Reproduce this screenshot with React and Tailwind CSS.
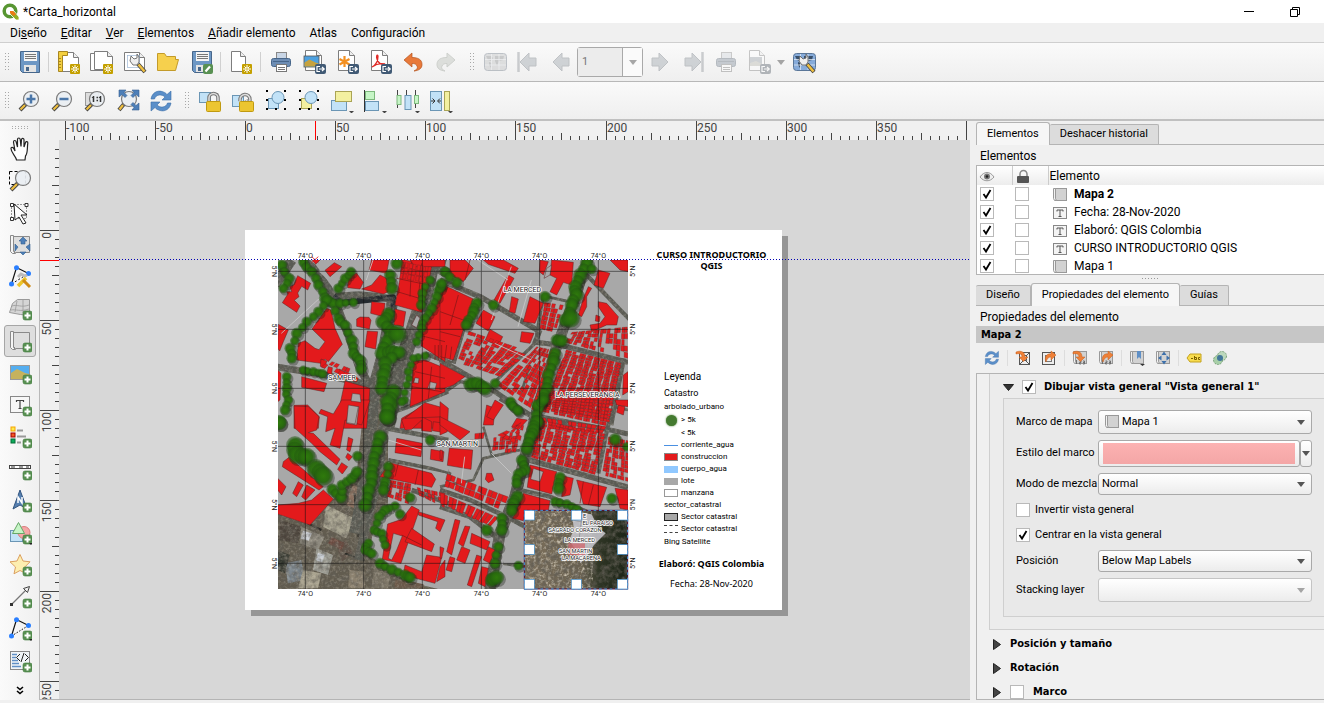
import React, { useLayoutEffect, useRef, useState } from "react";

const STEP = 90.15; // pixels for 50 mm on the rulers

/* ---------- small shared pieces ---------- */

function Icon({ children, size = 24, faded = false }) {
  return (
    <svg
      width={size}
      height={size}
      viewBox={`0 0 ${size} ${size}`}
      className={faded ? "opacity-40 grayscale-[60%] shrink-0" : "shrink-0"}
      aria-hidden="true"
    >
      {children}
    </svg>
  );
}

function PlusBadge() {
  return (
    <g>
      <rect x="15" y="14" width="9" height="9" rx="2" fill="#589052" stroke="#3f7a3c" strokeWidth="0.6" />
      <path d="M19.5 15.5v6M16.5 18.500h6" stroke="#fff" strokeWidth="2" />
    </g>
  );
}

function NewBadge() {
  return (
    <g>
      <rect x="13" y="14" width="10" height="10" rx="1" fill="#c4a000" />
      <path d="M18 15v8M14 19h8M15.300 16.300l5.400 5.400M20.700 16.300l-5.400 5.400" stroke="#fff" strokeWidth="1" />
      <circle cx="18" cy="19" r="1.300" fill="#c4a000" stroke="#fff" strokeWidth="0.800" />
    </g>
  );
}

function ExportBadge() {
  return (
    <g>
      <rect x="13" y="14" width="11" height="10" rx="2" fill="#415a75" />
      <path d="M18 16.500h-3v5h3M17 19h5M20 17l2.200 2-2.200 2" fill="none" stroke="#fff" strokeWidth="1.200" />
    </g>
  );
}

function Sheet({ x = 3, y = 1, w = 16, h = 20 }) {
  return (
    <g fill="#fff" stroke="#7d7d7d">
      <path d={`M${x + 0.5} ${y + 0.5}h${w - 6}l5 5v${h - 6}h-${w - 1}z`} />
      <path d={`M${x + w - 5.5} ${y + 0.5}v5h5`} fill="#eee" />
    </g>
  );
}

function Caret() {
  return <path d="M19 22h5l-2.500 2.500z" fill="#444" />;
}

/* ---------- toolbar icons ---------- */

const Floppy = () => (
  <g>
    <path d="M3.500 1.500h19v21h-17l-2-2z" fill="#6d97c4" stroke="#47668a" />
    <rect x="7" y="2" width="13" height="9" fill="#f4f4f4" />
    <path d="M8 4.500h11M8 6.500h11M8 8.500h11" stroke="#777" />
    <rect x="7" y="15" width="12" height="7" fill="#e4e4e4" />
    <rect x="9" y="17" width="3" height="4" fill="#47668a" />
  </g>
);

const Printer = () => (
  <g>
    <rect x="7.500" y="2.500" width="10" height="7" fill="#c9d6e6" stroke="#888" />
    <rect x="2.500" y="8.500" width="19" height="8" rx="2" fill="#6d8db4" stroke="#47668a" />
    <path d="M4 11.500h16" stroke="#47668a" />
    <rect x="7.500" y="14.500" width="10" height="7" fill="#fff" stroke="#777" />
    <path d="M9 17.500h7M9 19.500h7" stroke="#777" />
  </g>
);

const Lens = ({ children, x = 14, y = 10 }) => (
  <g>
    <path d={`M${x - 5} ${y + 5}L3 21`} stroke="#444" strokeWidth="4" />
    <path d={`M${x - 6} ${y + 6}L3.500 20.500`} stroke="#f0c040" strokeWidth="2.200" />
    <circle cx={x} cy={y} r="7.500" fill="#e9eef2" fillOpacity="0.920" stroke="#7b7b7b" strokeWidth="1.200" />
    {children}
  </g>
);

const Wrench = () => (
  <g>
    <path d="M15 14l7 8" stroke="#444" strokeWidth="4" />
    <path d="M15.500 14.500l6 7" stroke="#f0c040" strokeWidth="2.500" />
    <path d="M8 6l3 3 3-1 0-4 2 3 0 5-2 3-4 0-3-4z" fill="#eee" stroke="#666" strokeWidth="0.900" />
  </g>
);

const MapTile = ({ color = "#6d97c4", land = "#39506b" }) => (
  <g>
    <rect x="1.500" y="3.500" width="22" height="17" rx="3" fill={color} stroke="#5a7698" />
    <path d="M3 6h5l2 2-2 3-3-1zM12 6h9l-1 4-4 1-2 5-2-5zM6 12l3 1-1 5-2-3z" fill={land} />
    <path d="M2 9.500h21M2 15h21M8.500 4v16M16 4v16" stroke="#dfe8f2" strokeWidth="0.800" />
  </g>
);

const ArrowRight = () => <path d="M4 8h7V3l9 9-9 9v-5H4z" fill="#8ea2b3" stroke="#667a8d" />;
const Refresh = () => (
  <g fill="#5b8fc9" stroke="#3c6ea8" strokeWidth="0.600">
    <path d="M2 10C3 4 8 1 13 2.500c2 .5 4 1.500 5 3l4-3.500v9h-9l3-3C13 5 7 5 5.500 10z" />
    <path d="M22 14c-1 6-6 9-11 7.500-2-.5-4-1.500-5-3L2 22v-9h9l-3 3c3 3 9 3 10.500-2z" />
  </g>
);

const Nodes = () => (
  <g fill="#000">
    <rect x="2" y="1" width="2" height="2" /><rect x="20" y="1" width="2" height="2" />
    <rect x="2" y="10" width="2" height="2" /><rect x="20" y="10" width="2" height="2" />
    <rect x="2" y="19" width="2" height="2" /><rect x="11" y="19" width="2" height="2" /><rect x="20" y="19" width="2" height="2" />
  </g>
);

const Padlock = ({ open }) => (
  <g>
    <path d={open ? "M9 12c-1-8 10-9 10-1 0 2-3 2-4 0" : "M11 13V9a4.500 4.500 0 0 1 9 0v4"} fill="none" stroke="#777" strokeWidth="3.500" />
    <path d={open ? "M9 12c-1-8 10-9 10-1 0 2-3 2-4 0" : "M11 13V9a4.500 4.500 0 0 1 9 0v4"} fill="none" stroke="#ddd" strokeWidth="1.500" />
    <rect x="8.500" y="12.500" width="14" height="10" rx="1" fill="#ecc531" stroke="#c09a10" />
  </g>
);

const BLUE = { fill: "#c2e2f7", stroke: "#6b96b5" };
const YELLOW = { fill: "#f3f0a0", stroke: "#aaa455" };
const GREEN = { fill: "#c6f5c6", stroke: "#7db87d" };

const FILE_TOOLS = [
  ["Guardar proyecto", <Floppy />],
  null,
  ["Nueva composición", <><Sheet x={4} y={2} w={18} /><path d="M1.500 1.500h9v4h-5v16h-4z" fill="#f3cf3f" stroke="#a88620" /><path d="M2 8.500h2M2 11.500h2M2 14.500h2M2 17.500h2" stroke="#a88620" /><NewBadge /></>],
  ["Duplicar composición", <><Sheet x={0} y={3} w={18} h={18} /><Sheet x={4} y={1} w={19} h={19} /><NewBadge /></>],
  ["Administrador de composiciones", <><Sheet x={1} y={2} w={21} h={19} /><rect x="4.500" y="5.500" width="12" height="12" fill="none" stroke="#9db7d5" strokeWidth="0.700" /><Wrench /></>],
  ["Abrir plantilla", <path d="M1.500 20.500v-17h7l2 3h9v3h3l-3 11z" fill="#f6d04d" stroke="#c39b2a" />],
  ["Guardar como plantilla", <><Floppy /><rect x="14" y="14" width="10" height="10" rx="2" fill="#589052" /><path d="M16.500 21.500l4.500-5" stroke="#fff" strokeWidth="2.200" /></>],
  null,
  ["Nueva página", <><Sheet x={2} y={1} w={15} h={21} /><NewBadge /></>],
  null,
  ["Imprimir", <Printer />],
  ["Exportar como imagen", <><Sheet x={3} y={0} w={17} h={21} /><rect x="2" y="6" width="15" height="11" fill="#4ea1e0" stroke="#555" strokeWidth="0.800" /><path d="M2.500 16.500v-4l5-3 6 3 3 1v3z" fill="#c6a23f" /><ExportBadge /></>],
  ["Exportar como SVG", <><Sheet x={3} y={0} w={17} h={21} /><path d="M9.500 6v11M4.500 9l10 5.500M4.500 14.500l10-5.500" stroke="#f39021" strokeWidth="2.200" /><ExportBadge /></>],
  ["Exportar como PDF", <><Sheet x={3} y={0} w={17} h={21} /><path d="M4 17c4-2 6-6 6-11-1-2-2 0-1 3 1 4 4 6 8 5-4-1-9 0-13 3z" fill="none" stroke="#e02a26" strokeWidth="1.300" /><ExportBadge /></>],
  ["Deshacer", <path d="M3 10l8-7v4.500c6 0 10 2 10 7 0 4-3 6-8 6.500 3-1.500 4-3 3-5s-2-2.500-5-2.500V17z" fill="#e8793a" stroke="#b5531d" strokeWidth="0.700" />],
  ["Rehacer", <path d="M21 10l-8-7v4.500c-6 0-10 2-10 7 0 4 3 6 8 6.500-3-1.500-4-3-3-5s2-2.500 5-2.500V17z" fill="#b4c0ae" stroke="#8b9a84" />, true],
];

const ATLAS_BEFORE = [
  ["Vista previa del atlas", <MapTile color="#b8bcc0" land="#83898e" />, true],
  ["Primer objeto", <g transform="matrix(-1 0 0 1 24 0)"><ArrowRight /><path d="M21.500 2v20" stroke="#8390a0" strokeWidth="2.500" /></g>, true],
  ["Objeto anterior", <g transform="matrix(-1 0 0 1 24 0)"><ArrowRight /></g>, true],
];
const ATLAS_AFTER = [
  ["Objeto siguiente", <ArrowRight />, true],
  ["Último objeto", <><ArrowRight /><path d="M21.500 2v20" stroke="#8390a0" strokeWidth="2.500" /></>, true],
  ["Imprimir atlas", <Printer />, true],
  ["Exportar atlas", <><Sheet x={2} y={0} w={16} h={21} /><rect x="3" y="7" width="12" height="9" fill="#8ea2b3" /><path d="M3 16v-3l6-2 6 3v2z" fill="#b9b9a0" /><ExportBadge /></>, true],
];

const VIEW_TOOLS = [
  ["Acercar zum", <Lens><path d="M14 5.500v9M9.500 10h9" stroke="#4a76a8" strokeWidth="2.500" /></Lens>],
  ["Alejar zum", <Lens><path d="M9.500 10h9" stroke="#4a76a8" strokeWidth="2.500" /></Lens>],
  ["Zum al 100%", <><rect x="2.500" y="3.500" width="13" height="13" fill="#ddd" stroke="#999" /><Lens /><path d="M10.500 7v6M17.500 7v6M9 8.500l1.500-1M16 8.500l1.500-1" stroke="#333" strokeWidth="1.500" /><path d="M13.500 8.500h1.500M13.500 11.500h1.500" stroke="#333" strokeWidth="1.500" /></>],
  ["Zum general", <><Lens x={13} y={10} /><path d="M3 1h7L8 3.500l3 3-2 2-3-3L3 8zM23 1h-7l2 2.500-3 3 2 2 3-3 3 2.500zM23 21v-7l-3 2.500-3-3-2 2 3 3-2 2.500z" fill="#4d7fb8" stroke="#355f90" strokeWidth="0.600" /></>],
  ["Actualizar vista", <Refresh />],
];

const ACTION_TOOLS = [
  ["Bloquear elementos", <><rect x="1.500" y="3.500" width="11" height="10" {...BLUE} /><path d="M14 4.500h6v5" fill="none" stroke="#888" /><Padlock /></>],
  ["Desbloquear elementos", <><rect x="1.500" y="6.500" width="11" height="11" {...BLUE} /><Padlock open /></>],
  ["Agrupar", <><rect x="4.500" y="9.500" width="10" height="10" {...BLUE} /><circle cx="14" cy="8.500" r="6" {...BLUE} /><Nodes /></>],
  ["Desagrupar", <><rect x="4.500" y="9.500" width="10" height="10" {...YELLOW} /><circle cx="14" cy="8.500" r="6" {...BLUE} /><Nodes /></>],
  ["Elevar", <><rect x="1.500" y="11.500" width="15" height="10" {...BLUE} /><rect x="5.500" y="2.500" width="16" height="10" {...YELLOW} /><Caret /></>],
  ["Alinear a la izquierda", <><path d="M1.500 1v22" stroke="#333" /><rect x="2.500" y="2.500" width="9" height="8" {...GREEN} /><rect x="2.500" y="12.500" width="13" height="9" {...BLUE} /><Caret /></>],
  ["Distribuir", <><path d="M1.500 1v18M10.500 1v18M19.500 1v18" stroke="#444" /><rect x="1" y="6.500" width="4" height="9" {...GREEN} /><rect x="9" y="6.500" width="6" height="14" {...BLUE} /><rect x="18.500" y="6.500" width="4" height="8" {...GREEN} /><Caret /></>],
  ["Redimensionar", <><rect x="1.500" y="2.500" width="11" height="19" {...BLUE} /><rect x="15.500" y="2.500" width="5" height="19" {...YELLOW} /><path d="M2 12h3M12 12h-3M3.500 9.500L6 12l-2.500 2.500M11 9.500L8.500 12l2.500 2.500" fill="none" stroke="#333" /><Caret /></>],
];

const MapRoll = () => (
  <g stroke="#8a8a8a">
    <path d="M5.500 3.500h16v16h-14l-2-2z" fill="#dedede" />
    <path d="M2.500 2.500h3v16l2 2h-3l-2-2z" fill="#f5f5f5" />
  </g>
);

const NodeShape = ({ dashed }) => (
  <g>
    <path d="M3.500 19L8.500 2.500 20.500 8.500" fill="none" stroke="#111" strokeWidth="1.200" />
    <path d="M3.500 19L20.500 8.500" stroke="#111" strokeDasharray={dashed ? "1.500 1.500" : "2 2"} />
    <circle cx="8.500" cy="2.800" r="2.500" fill="#2a7fff" />
    <circle cx="20.500" cy="8.500" r="2.500" fill="#2a7fff" />
    <circle cx="3.500" cy="19" r="2.500" fill="#2a7fff" />
  </g>
);

const SIDE_TOOLS = [
  ["Desplazar diseño", <path d="M8.500 23C8 19 3 16 3 11.500c0-1.500 2-1.500 3 .5l1 2L5.500 5c0-2 2.300-2 2.700 0l1.300 5V2.500c0-2 2.500-2 2.700 0l.8 7 .5-7c.3-1.800 2.500-1.500 2.500.3L16 10l1.500-4.500c.6-1.600 2.500-1 2.300.6C19 11 20 16 17.500 19l-.5 4z" fill="#fff" stroke="#222" strokeWidth="1.200" />],
  ["Zum", <><rect x="1.500" y="2.500" width="16" height="13" fill="none" stroke="#000" strokeDasharray="3 2" /><Lens x={15} y={9} /></>],
  ["Seleccionar/mover elemento", <><rect x="3.500" y="3.500" width="15" height="14" fill="none" stroke="#333" strokeDasharray="1 2" /><path d="M2.500 2.500h3v3h-3zM17 2.500h3v3h-3zM2.500 16.500h3v3h-3z" fill="#fff" stroke="#333" /><path d="M6 3l13 11h-6l5 8-3 1-4-7-4 3z" fill="#fff" stroke="#222" /></>],
  ["Mover contenido", <><MapRoll /><path d="M15 4l4 4h-2v3h-4V8h-2zM15 22l-3-3h6zM7 11l3 3-3 4zM22 11l-4 3 4 4z" fill="#4d7fb8" stroke="#33608f" strokeWidth="0.600" /></>],
  ["Editar nodos", <><NodeShape /><path d="M10 12l3-3 4 2 2-1" stroke="#bbb" strokeWidth="3" fill="none" /><path d="M10 21l8-8" stroke="#edc52b" strokeWidth="3.500" /><path d="M15 15l7 7" stroke="#cf8a16" strokeWidth="3" /></>],
  ["Añadir mapa 3D", <><path d="M1.500 15.500l3-9 5-4h12v16l-9-1z" fill="#d5d5d5" stroke="#999" /><path d="M4 9c5-2 9 2 17-1M3 13c5-1 9 2 18-1M9 4l-2 11M15 3l0 13" stroke="#999" fill="none" strokeWidth="0.800" /><PlusBadge /></>],
  ["Añadir mapa", <><MapRoll /><PlusBadge /></>, true],
  ["Añadir imagen", <><rect x="2.500" y="4.500" width="19" height="14" fill="#55aef0" stroke="#999" /><path d="M3 18v-6l6-4 8 4 4 1v5z" fill="#c6b25d" /><PlusBadge /></>],
  ["Añadir etiqueta", <><rect x="2.500" y="3.500" width="19" height="16" fill="#f7f7f7" stroke="#888" /><path d="M8.500 9V7.500h7V9M12 7.500v8M10.500 15.500h3" stroke="#444" strokeWidth="1.200" fill="none" /><PlusBadge /></>],
  ["Añadir leyenda", <><rect x="3" y="2" width="4" height="4" fill="#fce94f" stroke="#f5a400" /><rect x="3" y="8" width="4" height="4" fill="#f15a22" stroke="#a40000" /><rect x="3" y="14" width="4" height="4" fill="#0cab5b" stroke="#056b35" /><path d="M9 5.500h6M9 11.500h9M9 17.500h4" stroke="#999" strokeWidth="2" /><PlusBadge /></>],
  ["Añadir barra de escala", <><rect x="1.500" y="8.500" width="21" height="3" fill="#fff" stroke="#444" /><path d="M3 10h4M11 10h4M18 10h3" stroke="#999" strokeWidth="2" /><PlusBadge /></>],
  ["Añadir flecha de norte", <><path d="M12 1l7 19-7-4-7 4z" fill="#557fb0" stroke="#33557f" /><path d="M10 14V8l4 6V8" stroke="#fff" strokeWidth="1.500" fill="none" /><PlusBadge /></>],
  ["Añadir forma", <><rect x="2.500" y="9.500" width="12" height="11" {...BLUE} /><circle cx="16" cy="11.500" r="6" fill="#f4a6a6" stroke="#d97c7c" /><path d="M10.500 1.500l6 11h-12z" fill="#c6f5c6" stroke="#67a767" /><PlusBadge /><path d="M21 22h4l-2 2z" fill="#222" /></>],
  ["Añadir marcador", <><path d="M12 1.500l3 6.500 7 .8-5 5 1.500 7L12 17.500l-6 3.300L7.500 14 2 8.800 9 8z" fill="#fdeeb0" stroke="#dba060" /><PlusBadge /></>],
  ["Añadir flecha", <><path d="M4 19L19 4" stroke="#777" strokeWidth="1.200" /><rect x="2" y="18" width="3" height="3" fill="#333" /><path d="M21.500 1.500l-6 2 4 4z" fill="#eee" stroke="#444" /><PlusBadge /></>],
  ["Añadir elemento de nodos", <><NodeShape dashed /><PlusBadge /><path d="M21 22h4l-2 2z" fill="#222" /></>],
  ["Añadir HTML", <><rect x="2.500" y="2.500" width="19" height="18" fill="#f0f4f7" stroke="#888" /><path d="M4 5.500h5M4 8.500h4M4 11.500h6M4 14.500h7M4 17.500h9" stroke="#5f8fc6" strokeWidth="1.700" /><path d="M12 5l-3.500 3.500L12 12M17 5l3.500 3.500L17 12M16 4l-3 9" fill="none" stroke="#222" /><PlusBadge /></>],
];

const MiniMap = () => (
  <g stroke="#999">
    <rect x="3.500" y="1.500" width="11" height="12" fill="#d2d2d2" />
    <path d="M1.500 1.500h2v10l1 2h-2l-1-2z" fill="#f2f2f2" />
  </g>
);
const OrangeIn = () => <path d="M1 2c5-2 9 0 9 5h3l-4.500 4.500L4 7h3C7 4 5 3 1 4z" fill="#ee8038" stroke="#c65f1d" strokeWidth="0.500" />;
const OrangeOut = () => <path d="M5 12C3 7 6 3 10 4V1l5 4-5 5V7C7 7 6 9 5 12z" fill="#ee8038" stroke="#c65f1d" strokeWidth="0.500" />;
const Scale = () => <path d="M4.500 10v4M7.500 11h1.500v1.500H7.500V14H9M11 11h1.500v3H11M11 12.500h1.500" stroke="#666" strokeWidth="0.900" fill="none" />;

const ITEM_TOOLS = [
  ["Actualizar vista previa", <g transform="scale(0.660)"><Refresh /></g>],
  null,
  ["Fijar extensión", <><rect x="4.500" y="2.500" width="10" height="12" fill="#eee" stroke="#555" /><path d="M7.500 5.500h4v5h-4zM5 3l3 3M14 3l-3 3M5 14l3-3M14 14l-3-3" stroke="#555" fill="none" /><OrangeIn /></>],
  ["Ver extensión", <><rect x="1.500" y="2.500" width="12" height="12" fill="#eee" stroke="#555" /><rect x="4.500" y="5.500" width="6" height="6" fill="none" stroke="#777" /><OrangeOut /></>],
  null,
  ["Fijar escala", <><MiniMap /><Scale /><OrangeIn /></>],
  ["Ver escala", <><MiniMap /><Scale /><OrangeOut /></>],
  null,
  ["Marcadores", <><MiniMap /><path d="M8 1h4v8l-2-2-2 2z" fill="#5f8fc6" /><path d="M11 14h5l-2.500 2z" fill="#333" /></>],
  ["Mover contenido del mapa", <><MiniMap /><path d="M9 1.500l2.500 3.500h-5zM9 14.500l2.500-3.500h-5zM3 8l3.500-2.500v5zM15 8l-3.500-2.500v5z" fill="#3d70ab" /></>],
  null,
  ["Etiquetas", <><path d="M1 8l3-4h11v8H4z" fill="#f8dc4e" stroke="#c4a21e" /><path d="M5 8.500h2M8.500 6v3.500h2v-2h-2M14 7.500h-1.500v2H14" stroke="#7b6000" fill="none" /></>],
  ["Recorte", <><circle cx="10" cy="6" r="4.500" fill="#bcd8bc" stroke="#7ca37c" strokeDasharray="2 1" /><circle cx="6" cy="10" r="4.500" fill="#a8cfa8" stroke="#7ca37c" strokeDasharray="2 1" /><circle cx="8" cy="8" r="3" fill="#41769a" /></>],
];

/* ---------- controls ---------- */

function ToolButton({ tool }) {
  const [label, art, faded] = tool;
  return (
    <button type="button" title={label} aria-label={label} disabled={Boolean(faded)} className="flex h-8 w-[33px] shrink-0 items-center justify-center">
      <Icon faded={faded}>{art}</Icon>
    </button>
  );
}

function Separator() {
  return <span className="mx-[3px] h-5 w-px shrink-0 bg-[#d0d0d0]" />;
}

function Grip() {
  return (
    <span className="grid h-[18px] w-1 shrink-0 grid-cols-2 gap-px">
      {Array.from({ length: 12 }, (_, i) => <i key={i} className="h-px w-px bg-[#a8a8a8]" />)}
    </span>
  );
}

function CheckBox({ id, label, checked }) {
  return (
    <span className="relative inline-flex h-[14px] w-[14px] shrink-0 align-middle">
      <input id={id} type="checkbox" aria-label={label} defaultChecked={checked} className="peer h-[14px] w-[14px] appearance-none border border-[#b9b9b9] bg-white" />
      <svg width="14" height="14" className="pointer-events-none absolute left-0 top-0 hidden peer-checked:block" aria-hidden="true">
        <path d="M3.500 7l2.500 3.500 4.500-7.500" fill="none" stroke="#000" strokeWidth="1.800" />
      </svg>
    </span>
  );
}

function Arrow({ faded }) {
  return (
    <svg width="8" height="5" className={faded ? "opacity-50" : ""} aria-hidden="true">
      <path d="M0 0h8L4 5z" fill="#555" />
    </svg>
  );
}

function Combo({ id, value, height = "h-[22px]", icon, disabled }) {
  return (
    <div className="relative flex-1">
      <select
        id={id}
        disabled={disabled}
        className={`block w-full appearance-none rounded-[3px] border bg-linear-to-b from-white to-[#ececec] text-black ${height} ${icon ? "pl-[23px]" : "pl-[3px]"} ${disabled ? "border-[#c4c4c4]" : "border-[#a9a9a9]"}`}
      >
        <option>{value}</option>
      </select>
      {icon && <span className="pointer-events-none absolute left-[6px] top-1"><Icon size={16}><MiniMap /></Icon></span>}
      <span className="pointer-events-none absolute inset-y-0 right-[7px] flex items-center"><Arrow faded={disabled} /></span>
    </div>
  );
}

function Tab({ active, children }) {
  return (
    <button
      type="button"
      role="tab"
      aria-selected={active}
      className={
        active
          ? "-mb-px h-[23px] rounded-t-[3px] border border-b-0 border-[#b4b4b4] bg-[#f6f6f6] px-[10px]"
          : "h-5 rounded-t-[2px] border border-l-0 border-b-0 border-[#b4b4b4] bg-[#dcdcdc] px-[10px]"
      }
    >
      {children}
    </button>
  );
}

/* ---------- rulers ---------- */

// current length of a ruler, so that only the ticks in view are drawn
function useLength(side) {
  const ref = useRef(null);
  const [length, setLength] = useState(0);
  useLayoutEffect(() => {
    const measure = () => setLength(ref.current.getBoundingClientRect()[side]);
    measure();
    window.addEventListener("resize", measure);
    return () => window.removeEventListener("resize", measure);
  }, [side]);
  return [ref, length];
}

function tickLength(i) {
  if (i % 10 === 0) return 19;
  return i % 5 === 0 ? 7 : 4;
}

function TopRuler() {
  const [ref, length] = useLength("width");
  const ticks = [];
  for (let i = -20; 186 + (i * STEP) / 10 < length; i++) {
    const x = Math.round(186 + (i * STEP) / 10);
    ticks.push(<path key={i} d={`M${x + 0.5} ${19 - tickLength(i)}V19`} stroke="#444" />);
    if (i % 10 === 0 && x + 20 < length) {
      ticks.push(<text key={`t${i}`} x={x + 1} y="11" className="fill-[#444] text-[12px]">{i * 5}</text>);
    }
  }
  return (
    <svg ref={ref} className="block h-[19px] w-full bg-[#f0f0f0]" role="img" aria-label="Regla horizontal">
      {ticks}
      <path d="M256.500 0V19" stroke="#f00" />
    </svg>
  );
}

function SideRuler() {
  const [ref, length] = useLength("height");
  const ticks = [];
  for (let i = -9; 109 + (i * STEP) / 10 < length; i++) {
    const y = Math.round(109 + (i * STEP) / 10);
    ticks.push(<path key={i} d={`M${19 - tickLength(i)} ${y + 0.5}H19`} stroke="#444" />);
    if (i % 10 === 0) {
      ticks.push(<text key={`t${i}`} transform={`translate(11 ${y + 2}) rotate(-90)`} textAnchor="end" className="fill-[#444] text-[12px]">{i * 5}</text>);
    }
  }
  return (
    <svg ref={ref} className="block h-full w-[19px] shrink-0 bg-[#f0f0f0]" role="img" aria-label="Regla vertical">
      {ticks}
      <path d="M0 139.500H19" stroke="#f00" strokeWidth="1" />
    </svg>
  );
}

/* ---------- cadastral map ---------- */

// repeatable pseudo random number for a pair of integers
function rnd(a, b) {
  const s = Math.sin(a * 127.1 + b * 311.7) * 43758.5453;
  return s - Math.floor(s);
}

// fills a four cornered block with small parcels
function parcels([a, b, c, d], cols, rows, keep) {
  const at = (u, v) => {
    const x = (1 - v) * ((1 - u) * a[0] + u * b[0]) + v * ((1 - u) * d[0] + u * c[0]);
    const y = (1 - v) * ((1 - u) * a[1] + u * b[1]) + v * ((1 - u) * d[1] + u * c[1]);
    return `${x.toFixed(1)} ${y.toFixed(1)}`;
  };
  let path = "";
  for (let i = 0; i < cols; i++) {
    for (let j = 0; j < rows; j++) {
      if (rnd(i + a[0], j + a[1]) > keep) continue;
      const side = i % 2 ? 0.04 : 0.26;
      const u0 = (i + side * rnd(i, j + 4) + (i % 2 ? 0 : 0.08)) / cols;
      const u1 = (i + 1 - (i % 2 ? 0.3 : 0.02) * rnd(j, i)) / cols;
      const v0 = (j + 0.04) / rows;
      const v1 = (j + 0.99 - 0.14 * rnd(j + 7, i)) / rows;
      path += `M${at(u0, v0)}L${at(u1, v0)}L${at(u1, v1)}L${at(u0, v1)}Z`;
    }
  }
  return path;
}

const QUADS = [
  {
    dx: -99, dy: -105,
    roads: [
      ["150 80 205 130 250 190 270 230 310 330 340 420 372 480 385 610", 24],
      ["265 215 340 210 400 215 450 225", 22],
      ["445 215 430 300 410 400 385 490 380 610", 34],
      ["560 120 540 210 500 330 460 440 425 610", 46],
      ["90 425 230 448 375 480", 20],
      ["90 180 140 105", 30],
      ["540 385 620 415", 14],
      ["450 560 560 520 610 500", 12],
      ["540 110 620 150", 30],
    ],
    lots: ["222 140 250 96 300 112 258 172"],
    red: [
      "112 233 128 208 125 200 140 200 134 185 146 180 158 152 197 175 188 195 170 184 158 204 162 215 148 226 165 243 155 262",
      "240 136 268 113 290 125 255 155", "198 100 230 100 212 118", "380 105 432 105 425 145 372 135",
      "310 152 335 145 355 172 345 192 308 188", "350 192 380 180 405 150 425 160 430 200 415 207",
      "380 230 420 235 415 275 377 265", "335 282 345 276 372 277 378 286 373 312 335 304",
      "367 318 398 320 392 372 360 365",
      "155 405 160 355 180 347 210 370 222 374 240 350 201 312 245 250 258 255 270 310 292 358 250 410 240 402 228 415",
      "100 298 130 315 115 350 104 378 98 370", "98 435 108 445 105 525 98 530",
      "170 455 245 475 237 500 170 487", "147 541 188 540 223 575 220 610 147 610",
      "300 468 375 490 365 610 270 610", "250 425 262 428 260 448 246 444", "282 432 340 460 335 470 278 455",
      "228 402 245 408 240 430 226 424",
      "470 105 480 105 560 125 550 180 530 262 450 240 467 150",
      "450 252 482 260 475 305 447 300", "600 165 560 270 535 300 528 362 600 410",
      "505 408 540 405 600 430 600 500 495 545", "470 580 530 545 600 550 600 610 465 610",
      "495 105 600 105 600 125 510 125",
    ],
    holes: ["322 505 345 508 348 532 318 528", "312 545 342 545 335 600 304 595", "510 458 522 460 520 475 506 473", "555 470 575 475 570 495 548 490", "500 300 515 270 525 280 515 308"],
    lines: ["440 195 540 225", "455 160 550 180", "500 110 495 215", "530 115 520 220", "520 330 600 350", "560 425 550 520", "510 440 600 460", "500 485 590 500", "570 360 570 405M580 360 580 405M590 360 590 405"],
    dense: [[[[470, 110], [550, 125], [545, 175], [460, 160]], 7, 3, 0.9], [[[250, 405], [340, 440], [335, 468], [225, 425]], 8, 2, 0.6]],
    trees: [
      [16, "175 112 200 140 220 180 240 220 265 235 280 280 300 300 320 345 325 385 345 405 348 432"],
      [15, "245 225 220 260 185 290 155 325 135 370 140 400"], [15, "110 120 132 160 115 190"],
      [14, "280 190 300 160 318 140"], [13, "285 235 325 232"], [17, "435 150 440 190"],
      [20, "430 268 412 290 440 320 425 350 410 385 440 378 462 382 420 415 415 450 410 490"], [27, "457 327"],
      [14, "555 165 532 205 528 240"], [14, "585 180 575 215 560 250 540 280 530 310 515 350"],
      [13, "540 392 505 400 490 440 485 480 478 525"], [22, "445 500 435 540 427 575"],
      [13, "175 435 205 440 232 446"], [14, "125 455 125 490 130 525 120 555"], [17, "455 115"], [20, "102 592"],
    ],
  },
  {
    dx: 486, dy: -105,
    roads: [
      ["0 165 120 215 300 320", 16], ["300 315 285 352 360 360 564 412", 15],
      ["445 100 400 230 345 380 280 590", 32], ["440 150 570 285", 12],
      ["0 405 80 450 150 490 270 570 400 600", 15], ["120 225 70 310 40 415", 14],
      ["285 355 165 470", 10], ["550 400 512 600", 16], ["310 210 300 270 290 330", 10], ["270 420 245 500", 8],
      ["0 510 60 470 90 475", 10], ["0 130 10 100", 22], ["320 215 410 235", 8], ["520 545 564 555", 8],
    ],
    lots: [],
    red: [
      "30 105 75 105 100 130 70 170 30 150", "0 175 100 222 40 405 0 395", "0 415 75 455 40 480 0 495",
      "130 105 190 105 235 130 225 145 145 118", "205 150 222 160 180 235 162 225",
      "130 255 165 275 145 318 108 295", "150 313 188 335 175 362 136 345",
      "215 215 235 222 225 265 208 260", "270 215 310 235 285 295 250 290",
      "245 320 282 325 270 355 240 350", "300 105 325 110 310 150 298 140",
      "335 105 400 112 395 180 370 172 350 210 330 200 350 160 330 150",
      "475 135 510 145 490 190 462 180", "510 105 564 105 564 140 540 135",
      "445 185 455 190 440 215 440 245 425 275 415 270 430 220",
      "475 230 500 235 535 275 530 300 500 300 455 320 450 300 480 295 495 275 475 245", "468 270 480 275 478 290 466 288",
      "535 540 555 545 550 570 530 562", "140 540 165 550 160 600 130 600", "550 450 564 440 564 500 548 510",
    ],
    holes: ["320 130 335 120 330 150 312 160"],
    lines: ["10 195 0 230", "55 210 30 300", "0 260 70 285", "0 320 60 335", "90 105 75 165", "20 360 15 400", "35 365 30 405"],
    dense: [
      [[[378, 374], [545, 415], [508, 592], [305, 550]], 16, 22, 0.96],
      [[[395, 322], [564, 305], [564, 402], [372, 352]], 16, 5, 0.85],
      [[[85, 318], [270, 380], [180, 455], [50, 412]], 14, 9, 0.85],
      [[[290, 365], [338, 375], [285, 560], [170, 480]], 9, 13, 0.88],
      [[[312, 232], [370, 240], [345, 325], [298, 310]], 5, 6, 0.8],
      [[[290, 575], [500, 605], [490, 625], [300, 610]], 14, 2, 0.9],
    ],
    trees: [
      [17, "15 140 50 172"], [15, "0 190 5 175"], [16, "110 235 100 260 85 285 78 300"], [15, "160 240"], [15, "315 215"],
      [19, "440 115 420 150 405 185 410 210 395 240 375 285"], [14, "455 132"], [27, "392 280"], [18, "350 345 365 347"],
      [18, "345 385 340 410 325 450 320 490 310 520 295 550 290 590"], [21, "90 478 112 475 135 490"],
      [14, "165 475"], [14, "210 535 235 558"],
    ],
  },
  {
    dx: -99, dy: 420,
    roads: [
      ["385 -5 372 150 350 300 330 400", 36], ["430 0 410 150 400 240 370 350 340 480", 26],
      ["400 80 610 120", 14], ["430 180 560 205 610 215", 12], ["500 270 610 310", 14],
    ],
    lots: ["445 110 610 130 610 215 560 200 438 175", "395 345 450 315 610 355 610 570 480 540 370 465"],
    red: [
      "147 18 190 20 222 50 215 90 190 98 205 100 285 178 275 195 225 155 200 130 150 85",
      "290 0 375 0 350 75 300 60 285 145 255 135 270 85 242 95 248 50 222 40 228 28 265 42",
      "310 112 324 118 315 155 305 150", "290 188 308 200 292 222 278 208", "308 160 322 170 312 182 302 172",
      "98 315 160 310 200 300 235 270 265 297 195 375 98 342", "115 185 132 172 235 260 222 270 112 200",
      "98 235 123 260 110 285 98 270", "160 245 175 255 155 290 143 280", "185 255 210 270 182 300 170 290",
      "455 115 532 130 528 170 450 158", "558 148 597 155 594 185 556 178",
      "435 188 560 220 572 238 560 262 405 230", "500 40 470 60 480 90 500 88 530 60 530 92 560 95 560 65 530 50",
      "480 55 540 8 600 25 600 50", "565 65 600 70 600 98 562 92",
      "428 372 470 358 500 318 523 330 468 490 412 478", "500 385 568 432 560 455 480 425",
      "545 465 590 472 570 550 475 525 480 495 530 515", "520 335 600 360 585 395 572 385 578 365 520 345", "585 500 600 480 600 530 575 545",
    ],
    holes: ["310 15 340 20 330 72 305 68", "445 400 472 408 455 450 440 480 430 475"],
    lines: ["460 190 450 230", "520 210 510 255", "470 405 530 435"],
    dense: [[[[435, 240], [500, 252], [490, 312], [425, 290]], 6, 5, 0.9], [[[515, 262], [600, 280], [600, 325], [520, 285]], 8, 3, 0.8]],
    trees: [
      [27, "150 135 155 165 185 170"], [28, "212 205 235 228"], [16, "262 268 288 292 290 255 320 235 335 215"], [14, "337 168"],
      [19, "405 110 395 150 385 190 380 230 370 270 360 315"], [22, "427 5 425 50"], [15, "430 200 420 245 415 270"],
      [15, "495 292"], [15, "465 342"], [14, "450 318 420 330 402 350 388 390 410 400 420 435"], [15, "370 430 360 450 380 460"],
      [15, "405 490 440 508 480 525 495 532"], [15, "555 120"], [13, "470 5"], [20, "103 68"],
    ],
  },
  {
    dx: 486, dy: 420,
    roads: [
      ["180 -5 270 45 520 92 564 102", 15], ["260 178 564 262", 16], ["300 0 255 170 225 290 180 400 150 570", 34],
      ["240 270 330 290 440 335", 13], ["0 270 90 300 200 350 255 380", 14], ["0 320 90 350 180 420", 15],
      ["525 0 500 95 475 220", 12], ["240 150 130 175 100 240 0 260", 8], ["130 80 155 165", 7], ["0 210 30 220 20 250", 8],
      ["190 490 260 500", 10],
    ],
    lots: ["215 370 255 395 255 490 190 490"],
    red: [
      "28 145 98 150 93 208 22 196", "0 150 8 152 5 180 0 178", "270 195 350 215 335 282 262 262",
      "250 280 330 302 325 332 255 332 250 362 218 355", "0 5 25 25 22 95 0 105", "0 50 90 95 60 120 0 75",
      "230 55 262 60 235 90 215 80", "165 0 190 15 160 60 140 50", "140 220 155 220 162 240 145 248 136 238",
      "525 0 564 0 564 20 530 15", "370 228 400 235 390 285 365 290",
      "410 240 500 262 480 320 430 312", "525 265 564 270 564 330 540 325",
      "45 358 60 362 35 465 20 455", "75 378 90 380 70 440 55 430", "0 440 12 445 5 475 0 475",
      "65 440 90 450 75 490 50 480", "95 400 150 425 140 450 90 430", "110 465 125 470 95 560 82 555",
      "30 470 45 475 35 515 18 510", "145 440 165 450 150 490 130 480", "125 500 145 505 135 560 115 550",
    ],
    holes: ["280 205 310 215 300 245 272 238", "420 178 465 180 455 200 415 192"],
    lines: ["430 245 420 310", "460 255 445 315"],
    dense: [
      [[[315, -20], [515, -20], [500, 78], [305, 35]], 16, 9, 0.96],
      [[[300, 60], [497, 102], [468, 225], [270, 172]], 16, 13, 0.96],
      [[[505, 110], [564, 122], [564, 245], [485, 225]], 7, 10, 0.85],
      [[[20, 220], [205, 290], [190, 332], [10, 258]], 12, 2, 0.95],
      [[[0, 276], [175, 352], [150, 380], [0, 312]], 13, 1, 0.98],
      [[[30, 95], [140, 75], [125, 140], [60, 135]], 6, 3, 0.5],
      [[[160, 100], [240, 95], [230, 155], [155, 165]], 8, 5, 0.75],
      [[[240, 70], [255, 60], [240, 140], [170, 105]], 4, 5, 0.6],
    ],
    trees: [
      [16, "212 5 232 30"], [16, "290 15 310 0"], [19, "290 65 280 90 270 110 260 145"], [16, "245 180 255 210 235 222 230 250"],
      [17, "232 290 220 310 215 332"], [16, "185 355 185 390"], [17, "140 390"], [15, "175 440 165 490"], [21, "155 540 170 532"],
      [17, "360 232 355 265"], [15, "345 305 380 312 410 328"], [17, "525 118"], [16, "515 295"], [14, "235 497"], [12, "560 140"],
    ],
  },
];

const GRID_X = [82, 257, 433, 610, 785, 961];
const GRID_Y = [34, 208, 385, 559, 734, 910];

function canopy(chains) {
  const out = [];
  chains.forEach(([r, text], n) => {
    const p = text.split(" ").map(Number);
    for (let i = 0; i < p.length; i += 2) {
      out.push([p[i], p[i + 1], r + 3 * rnd(n, i)]);
      if (i + 2 < p.length) {
        out.push([(p[i] + p[i + 2]) / 2 + 8 * (rnd(i, n) - 0.5), (p[i + 1] + p[i + 3]) / 2, r * 0.95]);
      }
    }
  });
  return out;
}

function Layer({ children }) {
  return QUADS.map((q, i) => <g key={i} transform={`translate(${q.dx} ${q.dy})`}>{children(q)}</g>);
}

function MapLabel({ x, y, size = 21, children }) {
  return (
    <text x={x} y={y} textAnchor="middle" fontSize={size} fill="#222" stroke="#fff" strokeWidth="5" strokeLinejoin="round" className="[paint-order:stroke]">
      {children}
    </text>
  );
}

const ROOFS = [
  ["8 780 70 800 60 850 0 840", "#4c443c"], ["70 800 140 830 120 870 65 850", "#8c887d"], ["145 735 228 775 205 835 135 800", "#a8a491"],
  ["20 910 70 900 80 960 30 970", "#7e8890"], ["75 930 130 940 120 985 60 985", "#aaa490"], ["115 865 165 885 150 945 105 930", "#a3a49c"],
  ["0 870 35 885 20 940 0 930", "#33372f"], ["175 850 205 840 225 880 190 905", "#5e5046"], ["215 930 260 935 260 985 210 985", "#8c8270"],
  ["225 670 250 690 230 745 205 735", "#8b705f"], ["160 830 200 850 190 870 150 850", "#6a4a40"], ["290 910 340 930 330 985 280 985", "#7c7566"],
  ["350 960 430 950 440 985 350 985", "#6d5a4a"], ["75 812 102 820 92 842 68 836", "#cfd3da"], ["120 878 140 884 132 908 114 900", "#c9cfd6"],
];
const GROUND = "M0 762L96 795 166 717 235 650 262 400 330 400 330 760 271 885 390 965 480 987H0z";

function CadastralMap() {
  return (
    <svg viewBox="0 0 1050 987" className="block h-[329px] w-[350px] overflow-visible" role="img" aria-label="Mapa catastral">
      <defs>
        <clipPath id="frame"><path d="M0 0h1050v987H0z" /></clipPath>
        <mask id="open" maskUnits="userSpaceOnUse" x="0" y="0" width="1050" height="987">
          <path d={GROUND} fill="#fff" />
          <Layer>{(q) => q.roads.map(([p, w]) => <polyline key={p} points={p} fill="none" stroke="#fff" strokeWidth={w} />)}</Layer>
        </mask>
        <radialGradient id="tree">
          <stop offset="0" stopColor="#2f7a0c" />
          <stop offset="0.600" stopColor="#286b0d" stopOpacity="0.950" />
          <stop offset="1" stopColor="#1f5210" stopOpacity="0.350" />
        </radialGradient>
        <filter id="ground" x="0" y="0" width="100%" height="100%">
          <feTurbulence type="fractalNoise" baseFrequency="0.060" numOctaves="4" seed="4" />
          <feColorMatrix values="0 0 0 0 0.12  0 0 0 0 0.11  0 0 0 0 0.09  2.400 0 0 0 -0.850" />
        </filter>
        <filter id="specks" x="0" y="0" width="100%" height="100%">
          <feTurbulence type="fractalNoise" baseFrequency="0.110" numOctaves="3" seed="9" />
          <feColorMatrix values="0 0 0 0 0.80  0 0 0 0 0.74  0 0 0 0 0.62  0 2.600 0 0 -1.150" />
        </filter>
        <linearGradient id="hills" x1="0" x2="1">
          <stop offset="0" stopColor="#7d705c" />
          <stop offset="0.550" stopColor="#6b6250" />
          <stop offset="0.720" stopColor="#2f3525" />
          <stop offset="1" stopColor="#1b2316" />
        </linearGradient>
      </defs>
      <g clipPath="url(#frame)" strokeLinejoin="round">
        <path d="M0 0h1050v987H0z" fill="#a8a8a8" />
        <path d={GROUND} fill="#625c4f" />
        {ROOFS.map(([p, c]) => <polygon key={p} points={p} fill={c} />)}
        <path d="M90 790l40 20M230 700l5 90M200 880l60 20M260 740l-20 90" stroke="#2a2a26" strokeWidth="6" />
        <Layer>{(q) => q.roads.map(([p, w]) => <polyline key={p} points={p} fill="none" stroke="#595b54" strokeWidth={w} />)}</Layer>
        <path d="M166 108L190 128 345 112 350 170" fill="none" stroke="#252b30" strokeWidth="18" />
        <g mask="url(#open)">
          <rect width="1050" height="987" filter="url(#ground)" opacity="0.700" />
          <rect width="1050" height="987" filter="url(#specks)" opacity="0.250" />
        </g>
        <Layer>{(q) => q.lots.map((p) => <polygon key={p} points={p} fill="#a8a8a8" />)}</Layer>
        <polygon points="0 600 25 620 60 590 150 690 100 725 30 720 0 700" fill="#a8a8a8" />
        <Layer>{(q) => q.red.map((p) => <polygon key={p} points={p} fill="#e31a1c" stroke="#5b2323" strokeWidth="1.500" />)}</Layer>
        <Layer>{(q) => q.holes.map((p) => <polygon key={p} points={p} fill="#a8a8a8" stroke="#5b2323" strokeWidth="1.500" />)}</Layer>
        <Layer>{(q) => q.lines.map((p) => <path key={p} d={`M${p}`} stroke="#7a1616" strokeWidth="2" fill="none" />)}</Layer>
        <Layer>{(q) => q.dense.map(([z, c, r, k], i) => <path key={i} d={parcels(z, c, r, k)} fill="#e31a1c" stroke="#6b2626" strokeWidth="1" />)}</Layer>
        <path d="M10 220L130 110M265 60L285 0M600 0L690 60M700 20L640 180M760 60L720 200M650 250L760 300M330 540L430 570M560 590l-10 80M640 580l60 60" stroke="#c9c9c9" strokeWidth="2.500" fill="none" />
        <Layer>{(q) => canopy(q.trees).map(([x, y, r], i) => <circle key={i} cx={x + 5} cy={y + 6} r={r} fill="#1a1f14" opacity="0.350" />)}</Layer>
        <Layer>{(q) => canopy(q.trees).map(([x, y, r], i) => <circle key={i} cx={x} cy={y} r={r} fill="url(#tree)" />)}</Layer>
        <path d={GRID_X.map((x) => `M${x} 0V987`).join("") + GRID_Y.map((y) => `M0 ${y}H1050`).join("")} stroke="#111" strokeWidth="2.500" opacity="0.650" />
      </g>
      <MapLabel x="192" y="361">SAMPER</MapLabel>
      <MapLabel x="733" y="97">LA MERCED</MapLabel>
      <MapLabel x="928" y="411">LA PERSEVERANCIA</MapLabel>
      <MapLabel x="538" y="557">SAN MARTIN</MapLabel>
      {GRID_X.map((x) => (
        <g key={x} fontSize="21" fill="#222" textAnchor="middle">
          <text x={x} y="-7">74°O</text>
          <text x={x} y="1007">74°O</text>
        </g>
      ))}
      {GRID_Y.map((y) => (
        <g key={y} fontSize="21" fill="#222" textAnchor="middle">
          <text transform={`translate(-19 ${y}) rotate(90)`}>5°N</text>
          <text transform={`translate(1071 ${y}) rotate(-90)`}>5°N</text>
        </g>
      ))}
      <path d="M101 -10l20 18M121 -10l-20 18M105 -1l6 8 8-6" stroke="#e31a1c" strokeWidth="2.500" fill="none" />

      {/* overview map, selected on the canvas */}
      <g transform="translate(738 750)">
        <rect width="312" height="237" fill="url(#hills)" />
        <rect width="205" height="237" filter="url(#specks)" opacity="0.750" />
        <rect width="312" height="237" filter="url(#ground)" opacity="0.800" />
        <path d="M143 5l60 8 20 40 22 17-35 35-15 25-25 30-15-40-20-30 15-30z" fill="#c9c9d0" opacity="0.850" />
        <path d="M133 100h50v35h-50z" fill="#d06a70" opacity="0.800" />
        <g stroke="#555" strokeWidth="1" fill="none"><path d="M145 30l50 10M150 60l70-10M150 90l50 0M175 10l-10 80" /></g>
        <MapLabel x="182" y="25" size="17">E</MapLabel>
        <MapLabel x="221" y="45" size="17">EL PARAISO</MapLabel>
        <MapLabel x="153" y="65" size="17">SAGRADO CORAZON</MapLabel>
        <MapLabel x="167" y="96" size="17">LA MERCED</MapLabel>
        <MapLabel x="155" y="128" size="17">SAN MARTIN</MapLabel>
        <MapLabel x="172" y="151" size="17">LA MACARENA</MapLabel>
        <rect x="1" y="1" width="310" height="236" fill="none" stroke="#5b0f35" strokeWidth="3" />
        <rect x="1" y="1" width="310" height="236" fill="none" stroke="#3f9be0" strokeWidth="3" strokeDasharray="8 8" />
        {[[1, 1], [142, 1], [280, 1], [1, 104], [280, 104], [1, 208], [142, 208], [280, 208]].map(([x, y]) => (
          <rect key={`${x}-${y}`} x={x} y={y} width="30" height="29" fill="#fff" stroke="#3f8fd0" strokeWidth="2" />
        ))}
      </g>
    </svg>
  );
}

const LEGEND = [
  ["corriente_agua", "h-px bg-[#4a90e2]"],
  ["construccion", "h-2 border border-[#888] bg-[#e31a1c]"],
  ["cuerpo_agua", "h-[7px] bg-[#90c8ff]"],
  ["lote", "h-[7px] bg-[#a8a8a8]"],
  ["manzana", "h-2 border border-[#999] bg-white"],
];

function Legend() {
  return (
    <div className="flex flex-col text-[8px] leading-[12px]">
      <span className="h-[17px] text-[10px] leading-[17px]">Leyenda</span>
      <span className="h-4 text-[9px] leading-4">Catastro</span>
      <span>arbolado_urbano</span>
      <span className="flex h-[14px] items-center gap-1">
        <i className="ml-[2px] h-[11px] w-[11px] rounded-full bg-[#447a30] shadow-[0_0_2px_#447a30]" />
        &gt; 5k
      </span>
      <span className="pl-[17px]">&lt; 5k</span>
      {LEGEND.map(([name, swatch]) => (
        <span key={name} className="flex h-3 items-center gap-[3px]">
          <i className={`w-[14px] ${swatch}`} />
          {name}
        </span>
      ))}
      <span>sector_catastral</span>
      <span className="flex h-3 items-center gap-[3px]">
        <i className="h-2 w-[14px] border border-[#222] bg-[#a8a8a8]" />
        Sector catastral
      </span>
      <span className="flex h-3 items-center gap-[3px]">
        <i className="h-2 w-[14px] border-y border-dashed border-[#444]" />
        Sector catastral
      </span>
      <span className="h-[14px] leading-[14px]">Bing Satellite</span>
    </div>
  );
}

function Canvas() {
  return (
    <div className="relative min-w-0 flex-1 overflow-hidden bg-[#d7d7d7]">
      <div className="absolute left-[186px] top-[90px] h-[380px] w-[537px] bg-white shadow-[6px_6px_0_#969696]">
        <div className="absolute left-[33px] top-[30px]"><CadastralMap /></div>
        <h1 className="absolute left-[407px] top-[19px] w-[119px] text-center font-['Noto_Sans',sans-serif] text-[9px] font-bold leading-[11px]">
          CURSO INTRODUCTORIO QGIS
        </h1>
        <div className="absolute left-[419px] top-[138px]"><Legend /></div>
        <div className="absolute left-[397px] top-[326px] w-[139px] text-center font-['Noto_Sans',sans-serif] text-[9px] leading-4">
          <p className="mb-1 font-bold">Elaboró: QGIS Colombia</p>
          <p>Fecha: 28-Nov-2020</p>
        </div>
      </div>
      <svg className="absolute left-0 top-[119px] h-px w-full" aria-hidden="true">
        <path d="M0 0.500H4000" stroke="#0000b4" strokeDasharray="1 2" />
      </svg>
    </div>
  );
}

/* ---------- side panels ---------- */

const ITEMS = [
  ["Mapa 2", "map", true],
  ["Fecha: 28-Nov-2020", "text"],
  ["Elaboró: QGIS Colombia", "text"],
  ["CURSO INTRODUCTORIO QGIS", "text"],
  ["Mapa 1", "map"],
];

function ItemsPanel() {
  return (
    <section className="flex flex-col">
      <div role="tablist" className="flex h-6 items-end border-b border-[#b4b4b4] text-[11px]">
        <Tab active>Elementos</Tab>
        <Tab>Deshacer historial</Tab>
      </div>
      <h2 className="h-5 pl-1 pt-px text-[12px] leading-5">Elementos</h2>
      <div className="h-[110px] overflow-hidden border border-r-0 border-[#b4b4b4] bg-white text-[12px]">
        <table className="w-full table-fixed border-collapse text-left">
          <thead>
            <tr className="h-[19px] bg-linear-to-b from-white to-[#ededed]">
              <th className="w-[35px] border-r border-[#ccc] p-0 pl-[2px]" aria-label="Visible">
                <Icon size={16}><path d="M1 9c4-6 10-6 14 0-4 5-10 5-14 0z" fill="#eee" stroke="#999" /><circle cx="8" cy="8.500" r="3" fill="#777" /><circle cx="8" cy="8.500" r="1.300" fill="#222" /></Icon>
              </th>
              <th className="w-[36px] border-r border-[#ccc] p-0 pl-[3px]" aria-label="Bloqueado">
                <Icon size={16}><path d="M4 8V6a3.500 3.500 0 0 1 7 0v3" fill="none" stroke="#888" strokeWidth="1.500" /><rect x="1" y="8" width="12" height="7" rx="1" fill="#555" /></Icon>
              </th>
              <th className="p-0 pl-px font-normal leading-[18px]">Elemento</th>
            </tr>
          </thead>
          <tbody>
            {ITEMS.map(([name, kind, bold]) => (
              <tr key={name} className="h-[18px]">
                <td className="p-0 pl-[3px] leading-none"><CheckBox label={`Visible: ${name}`} checked /></td>
                <td className="p-0 pl-[3px] leading-none"><CheckBox label={`Bloqueado: ${name}`} /></td>
                <td className="p-0">
                  <span className={bold ? "flex h-[18px] items-center gap-[6px] pl-1 font-bold" : "flex h-[18px] items-center gap-[6px] pl-1"}>
                    <Icon size={16}>
                      {kind === "map" ? <g transform="translate(0 1)"><MiniMap /></g> : <><rect x="1.500" y="3.500" width="13" height="11" fill="#f4f4f4" stroke="#888" /><path d="M5 7.500V6h6v1.500M8 6v6.500M6.500 12.500h3" stroke="#555" fill="none" /></>}
                    </Icon>
                    {name}
                  </span>
                </td>
              </tr>
            ))}
          </tbody>
        </table>
      </div>
    </section>
  );
}

function Row({ label, id, height = "h-[22px]", children }) {
  return (
    <div className={`flex items-center ${height}`}>
      <label htmlFor={id} className="w-[82px] shrink-0 whitespace-nowrap">{label}</label>
      {children}
    </div>
  );
}

function Folded({ children }) {
  return (
    <h3 className="flex h-6 items-center gap-[9px] pl-4 font-['DejaVu_Sans_Condensed','Noto_Sans',sans-serif] text-[11px] font-bold">
      <svg width="8" height="11" aria-hidden="true"><path d="M0.500 0.500v10l7-5z" fill="#444" stroke="#222" /></svg>
      {children}
    </h3>
  );
}

function PropertiesPanel() {
  return (
    <section className="flex min-h-0 flex-1 flex-col text-[11px]">
      <div role="tablist" className="flex h-6 shrink-0 items-end border-b border-[#b4b4b4]">
        <Tab>Diseño</Tab>
        <Tab active>Propiedades del elemento</Tab>
        <Tab>Guías</Tab>
      </div>
      <h2 className="h-5 shrink-0 pl-1 text-[12px] leading-[22px]">Propiedades del elemento</h2>
      <p className="h-[17px] shrink-0 bg-[#c6c6c6] pl-[5px] font-['DejaVu_Sans_Condensed','Noto_Sans',sans-serif] text-[11px] font-bold leading-[17px]">Mapa 2</p>
      <div className="flex h-[30px] shrink-0 items-center pl-[3px]">
        {ITEM_TOOLS.map((t, i) =>
          t ? (
            <button key={i} type="button" title={t[0]} aria-label={t[0]} className="flex h-6 w-[26px] shrink-0 items-center justify-center">
              <Icon size={16}>{t[1]}</Icon>
            </button>
          ) : (
            <span key={i} className="mx-[2px] h-4 w-px bg-[#ddd]" />
          )
        )}
      </div>
      <div className="min-h-0 flex-1 overflow-hidden border border-r-0 border-[#b4b4b4] bg-[#f0f0f0]">
        <div className="ml-3 border border-r-0 border-t-0 border-[#cfcfcf] bg-[#ececec] pb-3 pl-[13px]">
          <h3 className="flex h-6 items-center gap-2 pt-[2px] font-['DejaVu_Sans_Condensed','Noto_Sans',sans-serif] text-[11px] font-bold">
            <svg width="11" height="7" aria-hidden="true"><path d="M0.500 0.500h10l-5 6z" fill="#333" stroke="#222" /></svg>
            <CheckBox id="overview" checked />
            <label htmlFor="overview" className="whitespace-nowrap">Dibujar vista general "Vista general 1"</label>
          </h3>
          <div className="flex flex-col border border-r-0 border-[#cfcfcf] bg-[#e9e9e9] pb-[14px] pl-3 pr-3 pt-[11px]">
            <Row label="Marco de mapa" id="frameMap" height="h-6"><Combo id="frameMap" value="Mapa 1" height="h-6" icon /></Row>
            <div className="mt-[6px] flex h-[27px] items-center">
              <label htmlFor="frameStyle" className="w-[82px] shrink-0">Estilo del marco</label>
              <button id="frameStyle" type="button" className="h-[27px] flex-1 rounded-[3px] border border-[#a9a9a9] bg-linear-to-b from-white to-[#ececec] px-1 py-[2px]">
                <span className="block h-[21px] bg-linear-to-b from-[#fcb2b2] to-[#f4a6a6]" />
              </button>
              <button type="button" aria-label="Opciones de estilo" className="flex h-[27px] w-3 items-center justify-center rounded-[3px] border border-[#a9a9a9] bg-linear-to-b from-white to-[#ececec]">
                <Arrow />
              </button>
            </div>
            <div className="mt-[6px]"><Row label="Modo de mezcla" id="blend"><Combo id="blend" value="Normal" /></Row></div>
            <div className="mt-[6px] flex h-[18px] items-center gap-[5px]"><CheckBox id="invert" /><label htmlFor="invert">Invertir vista general</label></div>
            <div className="mt-[7px] flex h-[18px] items-center gap-[5px]"><CheckBox id="center" checked /><label htmlFor="center">Centrar en la vista general</label></div>
            <div className="mt-[6px]"><Row label="Posición" id="stack"><Combo id="stack" value="Below Map Labels" /></Row></div>
            <div className="mt-[6px]"><Row label="Stacking layer" id="layer" height="h-6"><Combo id="layer" value="" height="h-6" disabled /></Row></div>
          </div>
        </div>
        <div className="pt-[2px]">
          <Folded>Posición y tamaño</Folded>
          <Folded>Rotación</Folded>
          <Folded><CheckBox id="outline" /><label htmlFor="outline">Marco</label></Folded>
        </div>
      </div>
    </section>
  );
}

/* ---------- window ---------- */

const MENU = [["Di", "s", "eño"], ["", "E", "ditar"], ["", "V", "er"], ["", "E", "lementos"], ["", "A", "ñadir elemento"], ["Atlas"], ["Configuración"]];

export default function App() {
  return (
    <div className="flex h-screen flex-col overflow-hidden bg-[#f0f0f0] font-['Roboto','Noto_Sans',sans-serif] text-[12px] text-black">
      <header className="flex h-[23px] shrink-0 items-center bg-white pl-[2px]">
        <svg width="17" height="17" aria-hidden="true">
          <circle cx="8" cy="8" r="5.800" fill="none" stroke="#589632" strokeWidth="3.500" />
          <path d="M8 8h4l5 6v3h-3L8 11z" fill="#93b023" stroke="#fff" strokeWidth="0.800" />
          <path d="M8 8h3l3 3-2 2-4-3z" fill="#ee7913" />
        </svg>
        <span className="ml-1">*Carta_horizontal</span>
        <button type="button" aria-label="Minimizar" className="ml-auto flex h-5 w-[46px] items-center justify-center">
          <svg width="10" height="10" aria-hidden="true"><path d="M0 4.500h10" stroke="#000" /></svg>
        </button>
        <button type="button" aria-label="Restaurar" className="mr-[6px] flex h-5 w-[46px] items-center justify-center">
          <svg width="10" height="10" aria-hidden="true"><path d="M2.500 2V0.500h7v7H8M0.500 2.500h7v7h-7z" fill="none" stroke="#000" /></svg>
        </button>
      </header>

      <nav className="flex h-5 shrink-0 items-center gap-[14px] border-b border-[#cfcfcf] pl-[10px]">
        {MENU.map(([a, u, b]) => (
          <button key={a + u + b} type="button" className="leading-4">
            {a}{u && <u>{u}</u>}{b}
          </button>
        ))}
      </nav>

      <div className="flex h-[39px] shrink-0 items-center border-b border-[#b8b8b8] bg-linear-to-b from-[#fafafa] to-[#efefef] pl-[5px]">
        <Grip />
        <span className="w-[3px]" />
        {FILE_TOOLS.map((t, i) => (t ? <ToolButton key={i} tool={t} /> : <Separator key={i} />))}
        <span className="w-2" />
        <Grip />
        <span className="w-1" />
        {ATLAS_BEFORE.map((t) => <ToolButton key={t[0]} tool={t} />)}
        <div className="flex h-[30px] w-[66px] shrink-0 items-stretch rounded-[3px] border border-[#a9a9a9]">
          <input aria-label="Página del atlas" defaultValue="1" disabled className="w-[45px] border-r border-[#a9a9a9] bg-[#ececec] pl-1 text-[11px] text-[#777]" />
          <button type="button" aria-label="Elegir página" disabled className="flex flex-1 items-center justify-center bg-[#fafafa]"><Arrow faded /></button>
        </div>
        {ATLAS_AFTER.map((t) => <ToolButton key={t[0]} tool={t} />)}
        <button type="button" aria-label="Más opciones de exportación" className="flex h-8 w-3 items-center justify-center"><Arrow faded /></button>
        <ToolButton tool={["Configuración del atlas", <><MapTile color="#86abda" /><Wrench /></>]} />
      </div>

      <div className="flex h-[39px] shrink-0 items-center border-b-2 border-[#c0c0c0] bg-linear-to-b from-[#fafafa] to-[#efefef] pl-[5px]">
        <Grip />
        <span className="w-[3px]" />
        {VIEW_TOOLS.map((t) => <ToolButton key={t[0]} tool={t} />)}
        <span className="w-2" />
        <Grip />
        <span className="w-1" />
        {ACTION_TOOLS.map((t) => <ToolButton key={t[0]} tool={t} />)}
      </div>

      <main className="flex min-h-0 flex-1">
        <aside className="flex w-10 shrink-0 flex-col items-center border-r border-[#b8b8b8] bg-linear-to-r from-[#fafafa] to-[#f0f0f0] pt-[5px]">
          <span className="mb-1 grid h-[3px] grid-cols-6 gap-x-[2px] gap-y-px">
            {Array.from({ length: 12 }, (_, i) => <i key={i} className="h-px w-px bg-[#aaa]" />)}
          </span>
          {SIDE_TOOLS.map(([label, art, on]) => (
            <button
              key={label}
              type="button"
              title={label}
              aria-label={label}
              aria-pressed={Boolean(on)}
              className={on ? "flex h-8 w-8 shrink-0 items-center justify-center rounded-[3px] border border-[#a6a6a6] bg-[#dedede]" : "flex h-8 w-8 shrink-0 items-center justify-center"}
            >
              <Icon>{art}</Icon>
            </button>
          ))}
          <button type="button" aria-label="Más herramientas" className="flex min-h-0 w-8 flex-1 items-center justify-center pt-1">
            <svg width="8" height="9" aria-hidden="true"><path d="M1 1l3 2.500L7 1M1 5l3 2.500L7 5" fill="none" stroke="#000" strokeWidth="1.600" /></svg>
          </button>
        </aside>

        <div className="flex min-w-0 flex-1 border-b border-[#b4b4b4]">
          <SideRuler />
          <div className="flex min-w-0 flex-1 flex-col">
            <TopRuler />
            <Canvas />
          </div>
        </div>

        <div className="flex w-[354px] shrink-0 flex-col pl-[6px]">
          <ItemsPanel />
          <div className="flex h-[7px] shrink-0 items-center justify-center gap-[2px]">
            {Array.from({ length: 6 }, (_, i) => <i key={i} className="h-px w-px bg-[#999]" />)}
          </div>
          <PropertiesPanel />
        </div>
      </main>
      <footer className="h-[3px] shrink-0" />
    </div>
  );
}
